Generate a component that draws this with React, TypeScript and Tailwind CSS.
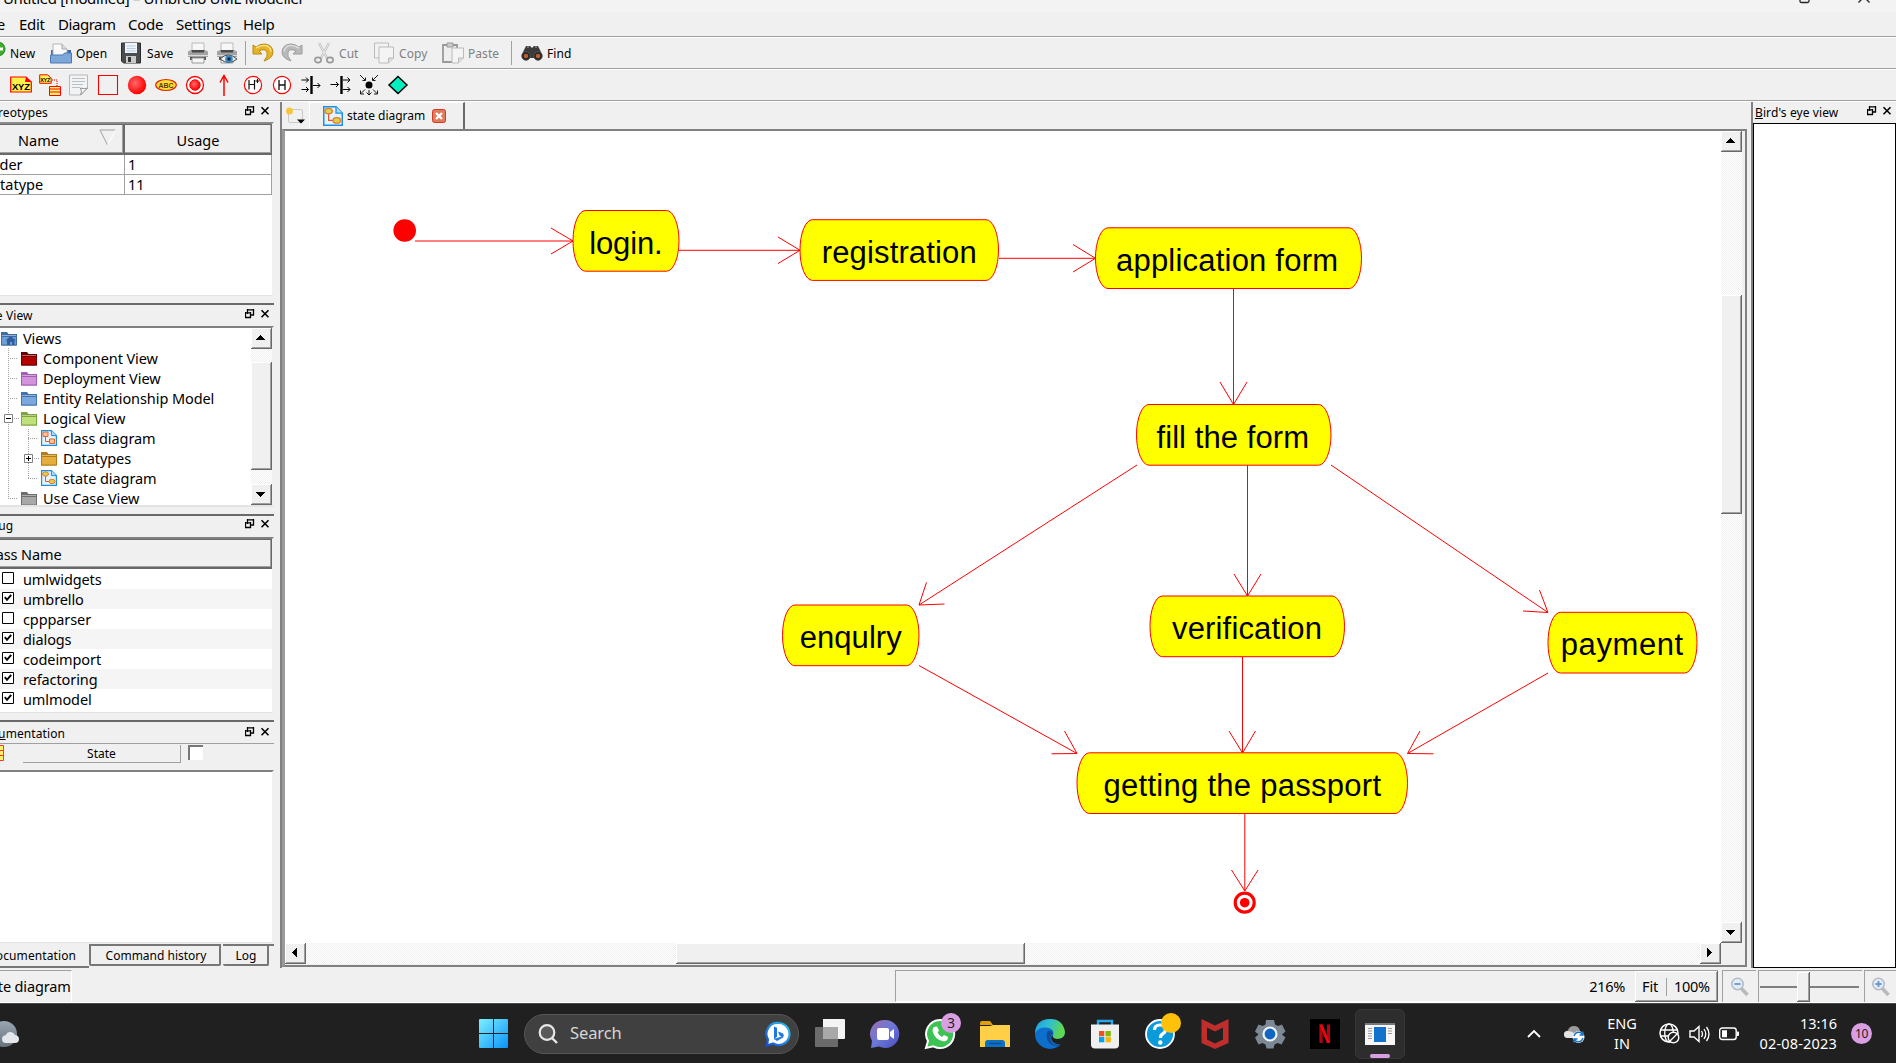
import React from "react";

const RAISED =
  "bg-[#f0f0f0] shadow-[inset_-1px_-1px_#696969,inset_1px_1px_#ffffff,inset_-2px_-2px_#a0a0a0]";
const DITHER =
  "bg-[conic-gradient(#ffffff_25%,#f0f0f0_0_50%,#ffffff_0_75%,#f0f0f0_0)] bg-[length:2px_2px]";

type Kids = { children?: React.ReactNode };

/* ---------- small shared pieces ---------- */

function Svg({ w, h, box, className = "", children }: Kids & { w: number; h: number; box?: string; className?: string }) {
  return (
    <svg width={w} height={h} viewBox={box ?? `0 0 ${w} ${h}`} className={`shrink-0 ${className}`} fill="none">
      {children}
    </svg>
  );
}

function ArrowButton({ dir }: { dir: "up" | "down" | "left" | "right" }) {
  const paths = {
    up: "M5 12h9v-1h-1v-1h-1v-1h-1v-1h-1V7h-1v1H8v1H7v1H6v1H5z",
    down: "M5 8h9v1h-1v1h-1v1h-1v1h-1v1h-1v-1H8v-1H7v-1H6V9H5z",
    left: "M12 5v9h-1v-1h-1v-1H9v-1H8v-1H7V9h1V8h1V7h1V6h1V5z",
    right: "M7 5v9h1v-1h1v-1h1v-1h1v-1h1V9h-1V8h-1V7H9V6H8V5z",
  };
  return (
    <div className={`h-[21px] w-[21px] shrink-0 ${RAISED}`}>
      <Svg w={21} h={21}>
        <path d={paths[dir]} fill="#000" />
      </Svg>
    </div>
  );
}

function DockButtons() {
  return (
    <Svg w={26} h={10} className="-mt-[2px]">
      <path d="M2.500 0v5M2 .9h7M8.500 0v6.500M6 6h3M0 3.900h6M.5 3v6M0 8.500h6M5.500 3v6" stroke="#000" strokeWidth="1.300" />
      <path d="M16.500 1.200l7 7M23.500 1.200l-7 7" stroke="#000" strokeWidth="1.600" />
    </Svg>
  );
}

function DockTitle({ children, className = "" }: Kids & { className?: string }) {
  return (
    <div className={`flex shrink-0 items-center justify-between pr-[3px] text-[12px] tracking-[0.100px] whitespace-nowrap ${className}`}>
      <span className="pt-[2px]">{children}</span>
      <DockButtons />
    </div>
  );
}

/* ---------- menu and toolbars ---------- */

function TitleBar() {
  return (
    <div className="flex h-3 shrink-0 justify-between overflow-hidden bg-[#f3f3f3]">
      <span className="mt-[-13px] ml-[3px] text-[15px] leading-[22px] tracking-[-0.360px] whitespace-nowrap">
        Untitled [modified] – Umbrello UML Modeller
      </span>
      <Svg w={110} h={12}>
        <path d="M14 -4v5q0 1.500 1.500 1.500h6q1.500 0 1.500 -1.500v-5M24 -6v6" stroke="#222" strokeWidth="1.300" />
        <path d="M72.500 2.500l11 -11M83.500 2.500l-11 -11" stroke="#222" strokeWidth="1.300" />
      </Svg>
    </div>
  );
}

function MenuBar() {
  return (
    <div className="flex h-6 shrink-0 items-center text-[15px] tracking-[-0.300px]">
      <span className="-ml-[18px] w-[37px]">File</span>
      <span className="w-[39px]">Edit</span>
      <span className="w-[70px] tracking-[-0.450px]">Diagram</span>
      <span className="w-[48px]">Code</span>
      <span className="w-[67px]">Settings</span>
      <span>Help</span>
    </div>
  );
}

function Rule() {
  return <div className="h-[2px] shrink-0 border-b border-white bg-[#a0a0a0]" />;
}

function Printer({ eye }: { eye?: boolean }) {
  return (
    <Svg w={22} h={22}>
      <path d="M5 1h12v8H5z" fill="#f7f7f7" stroke="#bbb" />
      <path d="M4 8h14v4H4z" fill="#4a4a4a" />
      <path d="M1 10q0-1.500 2-1.500h2v2h12v-2h2q2 0 2 1.500v5H1z" fill="#a3a3a3" />
      <path d="M1 13.500h20" stroke="#dcdcdc" />
      <path d="M3 15h16v3H3z" fill="#555" />
      <path d="M5 16h12v5H5z" fill="#f6f6f6" stroke="#999" />
      {eye && (
        <>
          <path d="M4 17q8-8 17 0q-8 7-17 0z" fill="#e7eef4" stroke="#444" />
          <circle cx="13" cy="17" r="3.800" fill="#3b8ac0" />
          <circle cx="13" cy="17" r="1.700" fill="#0e2a44" />
        </>
      )}
    </Svg>
  );
}

function Undo({ grey }: { grey?: boolean }) {
  return (
    <Svg w={22} h={20} className={grey ? "-scale-x-100" : ""}>
      <path
        d="M1 2v9h9L7 8q6-3 8 1q1.500 4-3 9q9-3 9-9Q20 1 12 1Q8 1 4 4z"
        fill={grey ? "#b9b9b9" : "#e6b422"}
        stroke={grey ? "#9c9c9c" : "#b98a10"}
      />
      <path d="M4 5Q9 2 13 2.500q5 .5 6 6" stroke={grey ? "#dcdcdc" : "#fbe08a"} strokeWidth="1.500" />
    </Svg>
  );
}

function MainToolbar() {
  return (
    <div className="flex h-[30px] shrink-0 items-center overflow-hidden text-[12px] tracking-[0.050px] [&_span]:pt-[1px]">
      <div className="flex w-[50px] items-center">
        <Svg w={10} h={22}>
          <circle cx="-2" cy="7" r="7" fill="#3fae2a" stroke="#1c8a1c" />
          <path d="M-2 7h5" stroke="#fff" strokeWidth="3" />
        </Svg>
        <span>New</span>
      </div>
      <div className="flex w-[71px] items-center gap-1">
        <Svg w={22} h={22}>
          <path d="M1 8h20v12H1z" fill="#3d6ca6" />
          <path d="M3 16V2h9l5 5v9z" fill="#fafafa" stroke="#b5b5b5" />
          <path d="M12 2v5h5" fill="#ddd" stroke="#aaa" />
          <path d="M.5 13h12l2-2h7v10H.5z" fill="#7ca7d8" stroke="#4a7ab4" />
        </Svg>
        <span>Open</span>
      </div>
      <div className="flex w-[66px] items-center gap-[6px]">
        <Svg w={20} h={22}>
          <path d="M.5 1h19v20H2.500L.5 19z" fill="#4a4d50" stroke="#2b2b2b" />
          <path d="M4 1h12v10H4z" fill="#eef4fa" />
          <path d="M5.500 4h9M5.500 6.500h9M5.500 9h9" stroke="#b7cce2" />
          <path d="M5 14h10v7H5z" fill="#c9c9c9" />
          <path d="M7 15h3v5H7z" fill="#333" />
        </Svg>
        <span>Save</span>
      </div>
      <div className="w-[29px]"><Printer /></div>
      <div className="w-[29px]"><Printer eye /></div>
      <div className="mr-[6px] h-6 w-[1px] bg-[#a0a0a0]" />
      <div className="w-[29px]"><Undo /></div>
      <div className="w-[33px]"><Undo grey /></div>
      <div className="flex w-[60px] items-center gap-[5px] text-[#808080]">
        <Svg w={20} h={22}>
          <path d="M5 1l8 15M15 1L7 16" stroke="#bdbdbd" strokeWidth="2.400" />
          <path d="M5 1l8 15M15 1L7 16" stroke="#ededed" strokeWidth="1" />
          <ellipse cx="4" cy="18" rx="3.200" ry="2.600" stroke="#999" strokeWidth="1.600" />
          <ellipse cx="16" cy="18" rx="3.200" ry="2.600" stroke="#999" strokeWidth="1.600" />
        </Svg>
        <span>Cut</span>
      </div>
      <div className="flex w-[68px] items-center gap-[5px] text-[#808080]">
        <Svg w={20} h={22}>
          <path d="M.5 1h14v15H.5z" fill="#f2f2f2" stroke="#bbb" />
          <path d="M5 5h14.500v11l-5 5H5z" fill="#f4f4f4" stroke="#bbb" />
          <path d="M14.500 21v-5h5" fill="#ddd" stroke="#bbb" />
        </Svg>
        <span>Copy</span>
      </div>
      <div className="flex w-[69px] items-center gap-1 text-[#808080]">
        <Svg w={22} h={22}>
          <path d="M1 3h14v17H1z" fill="#eee" stroke="#999" strokeWidth="1.800" />
          <path d="M5 1h6v4H5z" fill="#ccc" stroke="#999" />
          <path d="M10 6h11.500v10l-5 5H10z" fill="#f4f4f4" stroke="#bbb" />
          <path d="M16.500 21v-5h5" fill="#ddd" stroke="#bbb" />
        </Svg>
        <span>Paste</span>
      </div>
      <div className="mr-[9px] h-6 w-[1px] bg-[#a0a0a0]" />
      <div className="flex items-center gap-1">
        <Svg w={22} h={16}>
          <path d="M5 1h4l2 2l2-2h4l4 8v4H1V9z" fill="#3b3b3b" />
          <path d="M6 2h2M14 2h2" stroke="#aaa" />
          <circle cx="5" cy="11" r="4.200" fill="#222" stroke="#555" />
          <circle cx="5" cy="11" r="2.300" fill="#b4602a" />
          <circle cx="17" cy="11" r="4.200" fill="#222" stroke="#555" />
          <circle cx="17" cy="11" r="2.300" fill="#b4602a" />
        </Svg>
        <span>Find</span>
      </div>
    </div>
  );
}

function ToolSlot({ children }: Kids) {
  return (
    <div className="flex w-[29px] shrink-0 items-center justify-center">
      <Svg w={22} h={22}>{children}</Svg>
    </div>
  );
}

function DiagramToolbar() {
  return (
    <div className="flex h-[30px] shrink-0 items-center pl-[6px]">
      <ToolSlot>
        <path d="M.7 3h15.300l5.300 5v10H.7z" fill="#fff04a" stroke="red" strokeWidth="1.200" />
        <path d="M16 3l-1 5h6z" fill="red" />
        <text x="2" y="16" fontSize="9.500" fontWeight="700" fill="#000" textLength="18" fontFamily="Liberation Sans">XYZ</text>
      </ToolSlot>
      <ToolSlot>
        <path d="M.7 .8h8l3.500 3.500v5H.7z" fill="#fff04a" stroke="red" />
        <text x="1.300" y="8" fontSize="5.500" fontWeight="700" fill="#000" textLength="10" fontFamily="Liberation Sans">XYZ</text>
        <path d="M13 6h5v6" stroke="red" strokeDasharray="1 1" />
        <path d="M10.500 12.500h11v9h-11z" fill="#fff36a" stroke="red" />
        <path d="M10 15h12M10 18h12" stroke="red" />
      </ToolSlot>
      <ToolSlot>
        <path d="M1.500 1h18v13l-7 7h-11z" fill="#f2f3f4" stroke="#b6b9bb" />
        <path d="M4 4.500h13M4 7.500h13M4 10.500h11M4 13.500h8" stroke="#bbc0c4" />
        <path d="M12.500 21q2-3 0-7q4 1.500 7 0z" fill="#fafafa" stroke="#8e9295" />
      </ToolSlot>
      <ToolSlot><path d="M1.500 1.500h19v19h-19z" stroke="red" strokeWidth="1.100" /></ToolSlot>
      <ToolSlot>
        <defs>
          <radialGradient id="ball" cx="0.400" cy="0.400" r="0.600">
            <stop offset="0" stopColor="#ff6a6a" /><stop offset="1" stopColor="#f00" />
          </radialGradient>
        </defs>
        <circle cx="11" cy="11" r="9.200" fill="url(#ball)" />
      </ToolSlot>
      <ToolSlot>
        <ellipse cx="11" cy="11" rx="10.300" ry="5.500" fill="#ffdf30" stroke="#e02a10" strokeWidth="1.200" />
        <text x="3.600" y="13.700" fontSize="7" fontWeight="700" fill="#5a3c00" textLength="15" fontFamily="Liberation Sans">ABC</text>
      </ToolSlot>
      <ToolSlot>
        <circle cx="11" cy="11" r="8.500" stroke="red" strokeWidth="1.300" fill="#fff" />
        <circle cx="11" cy="11" r="5.200" fill="url(#ball)" stroke="red" />
      </ToolSlot>
      <ToolSlot><path d="M11 22V2M7 8.500l4-7l4 7" stroke="red" strokeWidth="1.500" /></ToolSlot>
      <ToolSlot>
        <circle cx="11" cy="11" r="8.600" stroke="red" strokeWidth="1.200" fill="#fff" />
        <path d="M7 6v9.500M12.500 6v9.500M7 10.500h5.500M13.500 7h4M15.500 5v4" stroke="#111" strokeWidth="1.200" />
      </ToolSlot>
      <ToolSlot>
        <circle cx="11" cy="11" r="8.600" stroke="red" strokeWidth="1.200" fill="#fff" />
        <path d="M8 6v10M14 6v10M8 11h6" stroke="#111" strokeWidth="1.300" />
      </ToolSlot>
      <ToolSlot>
        <path d="M11.500 2v18" stroke="#000" strokeWidth="2.400" />
        <path d="M1.500 6h7M6 3.500L8.500 6L6 8.500M1.500 15.500h7M6 13l2.500 2.500L6 18M13 11.500h7M17.500 9l2.500 2.500l-2.500 2.500" stroke="#000" />
      </ToolSlot>
      <ToolSlot>
        <path d="M12.500 2v18" stroke="#000" strokeWidth="2.400" />
        <path d="M1.500 10.500h8M7 8l2.500 2.500L7 13M14 6h7M18.500 3.500L21 6l-2.500 2.500M14 15.500h7M18.500 13l2.500 2.500l-2.500 2.500" stroke="#000" />
      </ToolSlot>
      <ToolSlot>
        <circle cx="11" cy="11" r="3.500" fill="#000" />
        <path d="M2 1l5 5M7.500 3.500v3H4.500M20 1l-5 5M14.500 3.500v3h3M7 15.500l-4 4M2.500 16.500V20h3.500M15 15.500l4 4M19.500 16.500V20h-3.500M11 16v5M8.500 18.500L11 21l2.500-2.500" stroke="#000" strokeWidth="0.900" />
      </ToolSlot>
      <ToolSlot><path d="M11 2.500l9 8.500l-9 8.500l-9-8.500z" fill="#00f0c0" stroke="#000" strokeWidth="1.500" /></ToolSlot>
    </div>
  );
}

/* ---------- left dock ---------- */

function Stereotypes() {
  return (
    <>
      <DockTitle className="h-[20px]"><span className="-ml-[20px]">Stereotypes</span></DockTitle>
      <div className="flex h-[174px] shrink-0 flex-col border-t-2 border-r-2 border-b border-t-[#8a8a8a] border-r-[#f0f0f0] border-b-[#e3e3e3] bg-white text-[14.500px]">
        <div className="flex h-[31px] shrink-0 border-t border-[#696969] bg-[#f0f0f0]">
          <div className="relative flex w-[125px] items-center border-r-2 border-b-2 border-[#696969] pt-[3px] pl-[18px] shadow-[inset_-1px_-1px_#a0a0a0]">
            Name
            <Svg w={17} h={17} className="absolute top-[4px] right-[7px]">
              <path d="M16.500 1H1l7.500 15" stroke="#a0a0a0" />
              <path d="M16.500 1L9 16" stroke="#fff" />
            </Svg>
          </div>
          <div className="flex grow items-center justify-center border-r border-b-2 border-[#696969] pt-[3px] shadow-[inset_-1px_-1px_#a0a0a0]">Usage</div>
        </div>
        {[["folder", "1", "-ml-[18px]"], ["datatype", "11", "-ml-[17px]"]].map(([name, n, ml]) => (
          <div key={name} className="flex h-[20px] shrink-0 border-b border-[#a0a0a0] leading-[19px]">
            <div className="w-[125px] overflow-hidden border-r border-[#a0a0a0]"><span className={ml}>{name}</span></div>
            <div className="grow border-r border-[#a0a0a0] pl-[3px]">{n}</div>
          </div>
        ))}
      </div>
    </>
  );
}

function Folder({ front, back, home }: { front: string; back: string; home?: boolean }) {
  return (
    <Svg w={16} h={15}>
      <path d="M0 1h6l1.500 2H16v11.500H0z" fill={back} />
      <path d="M.5 5.500h15v8.500H.5z" fill={front} stroke={back} />
      <path d="M1 4.500h14" stroke="#fff" strokeOpacity="0.450" />
      {home && <path d="M6 14v-4.500H4.500L9.500 5L15 9.500h-1.500V14h-2.500v-3h-2v3z" fill="#2f5f9c" />}
    </Svg>
  );
}

function DiagramIcon({ size = 16, oval }: { size?: number; oval?: boolean }) {
  return (
    <Svg w={size} h={size} box="0 0 16 16">
      <path d="M.6.6h9.800l5 5v9.800H.6z" fill="#e4f4ff" stroke="#1e8fe0" strokeWidth="1.200" />
      <path d="M10.400.6v5h5" fill="#a9dcff" stroke="#1e8fe0" />
      <path d="M4.500 6v5.500H9" stroke="#e4572e" />
      {oval ? (
        <>
          <ellipse cx="4.500" cy="4" rx="3" ry="2.200" fill="#d9d24a" stroke="#e8762c" />
          <ellipse cx="11" cy="11.500" rx="3" ry="2.200" fill="#d9d24a" stroke="#e8762c" />
        </>
      ) : (
        <>
          <path d="M2 2h5v4.500H2z" fill="#ffc59a" stroke="#e8622c" />
          <path d="M8.500 9h5v4.500h-5z" fill="#ffc59a" stroke="#e8622c" />
        </>
      )}
    </Svg>
  );
}

function TreeView() {
  const rows = [
    { ml: "ml-[1px]", label: "Views", icon: <Folder front="#6f9fd8" back="#3f6ca6" home /> },
    { ml: "ml-[21px]", label: "Component View", icon: <Folder front="#b50000" back="#6c0000" /> },
    { ml: "ml-[21px]", label: "Deployment View", icon: <Folder front="#d193dc" back="#a25fb4" /> },
    { ml: "ml-[21px]", label: "Entity Relationship Model", icon: <Folder front="#7ba9dd" back="#4273b0" /> },
    { ml: "ml-[21px]", label: "Logical View", icon: <Folder front="#bfe07c" back="#7fa63c" /> },
    { ml: "ml-[41px]", label: "class diagram", icon: <DiagramIcon /> },
    { ml: "ml-[41px]", label: "Datatypes", icon: <Folder front="#e6ae3c" back="#b47c18" /> },
    { ml: "ml-[41px]", label: "state diagram", icon: <DiagramIcon oval /> },
    { ml: "ml-[21px]", label: "Use Case View", icon: <Folder front="#a8a8a8" back="#6e6e6e" /> },
  ];
  return (
    <>
      <DockTitle className="h-[23px] border-t-2 border-[#696969] pb-[2px]"><span className="-ml-[22px]">Tree View</span></DockTitle>
      <div className="flex h-[181px] shrink-0 border-t-2 border-r-2 border-b-2 border-t-[#808080] border-r-[#f0f0f0] border-b-[#e3e3e3] bg-white">
        <div className="relative flex grow flex-col overflow-hidden">
          <Svg w={60} h={177} className="absolute top-0 left-0">
            <path d="M8.500 20v151M8 30.500h10M8 50.500h10M8 70.500h10M14 90.500h5M8 170.500h10M28.500 101v49M28 110.500h10M34 130.500h5M28 150.500h10" stroke="#a0a0a0" strokeDasharray="1 1" />
            <path d="M4.500 86.500h8v8h-8zM24.500 126.500h8v8h-8z" fill="#fff" stroke="#808080" />
            <path d="M6 90.500h5M26 130.500h5M28.500 128v5" stroke="#000" />
          </Svg>
          {rows.map((r) => (
            <div key={r.label} className="flex h-[20px] shrink-0 items-center">
              <span className={`flex items-center gap-[6px] ${r.ml}`}>
                {r.icon}
                <span className="text-[14.500px] leading-[20px] tracking-[-0.080px] whitespace-nowrap">{r.label}</span>
              </span>
            </div>
          ))}
        </div>
        <div className={`flex w-[21px] shrink-0 flex-col justify-between ${DITHER}`}>
          <ArrowButton dir="up" />
          <div className={`mb-[1px] h-[108px] ${RAISED}`} />
          <ArrowButton dir="down" />
        </div>
      </div>
    </>
  );
}

function DebugPanel() {
  const rows: [string, boolean][] = [
    ["umlwidgets", false], ["umbrello", true], ["cppparser", false], ["dialogs", true],
    ["codeimport", true], ["refactoring", true], ["umlmodel", true],
  ];
  return (
    <>
      <DockTitle className="h-[23px] border-t-2 border-[#696969] pb-[3px]"><span className="-ml-[25px]">Debug</span></DockTitle>
      <div className="h-[176px] shrink-0 border-t-2 border-r-2 border-b border-t-[#808080] border-r-[#f0f0f0] border-b-[#e3e3e3] bg-white text-[14.500px] tracking-[-0.100px]">
        <div className="flex h-[30px] items-center border-t border-r border-b-2 border-[#696969] bg-[#f0f0f0] pt-[3px] shadow-[inset_-1px_-1px_#a0a0a0]">
          <span className="-ml-[17px]">Class Name</span>
        </div>
        {rows.map(([name, on]) => (
          <div key={name} className="flex h-[20px] items-center gap-[9px] pl-[2px] even:bg-white odd:bg-[#f5f5f5]">
            <Svg w={12} h={12} className="-mt-[3px]">
              <path d="M.5.5h11v11H.5z" fill="#fff" stroke="#000" />
              {on && <path d="M2.800 5.200l2.200 2.600l4.200-5" stroke="#000" strokeWidth="1.900" />}
            </Svg>
            <span className="leading-[20px]">{name}</span>
          </div>
        ))}
      </div>
    </>
  );
}

function DocumentationPanel() {
  return (
    <>
      <DockTitle className="h-[24px] border-t-2 border-b border-t-[#696969] border-b-[#a0a0a0]">
        <span className="-ml-[24px]">Doc<u>u</u>mentation</span>
      </DockTitle>
      <div className="flex h-[26px] shrink-0 pt-[1px] text-[12px]">
        <Svg w={4} h={17}>
          <path d="M-8 .5H3.500v15H-8z" fill="#fff36a" stroke="#f33" />
          <path d="M-8 5.500h12M-8 10.500h12" stroke="#f33" />
        </Svg>
        <div className="ml-[19px] flex h-[18px] w-[158px] items-center justify-center border-r border-b border-[#a0a0a0]">State</div>
        <div className="ml-[7px] h-[15px] w-[15px] border-t-2 border-l-2 border-[#777] bg-white" />
      </div>
      <div className="h-[173px] shrink-0 border-t-2 border-r-2 border-b border-t-[#808080] border-r-[#f0f0f0] border-b-[#e3e3e3] bg-white" />
      <div className="flex h-[25px] shrink-0 items-start pt-[1px] text-[12px] tracking-[0.050px]">
        <div className="h-[24px] w-[89px] border-b-2 border-[#777] pt-[3px]"><span className="-ml-[13px] tracking-[0.100px]">Documentation</span></div>
        <div className="flex h-[22px] w-[132px] items-center justify-center rounded-b-[2px] border-2 border-[#777] pt-[2px] pl-[2px] tracking-[0]">Command history</div>
        <div className="ml-[2px] flex h-[22px] w-[46px] items-center justify-center rounded-b-[2px] border-t-2 border-r-2 border-b-2 border-[#777] pt-[2px] pl-[2px]">Log</div>
        <div className="h-[2px] w-[5px] bg-[#777]" />
      </div>
    </>
  );
}

/* ---------- diagram ---------- */

const nodes = [
  { label: "login.", x: 573, y: 210.5, w: 106, tx: 589.2, tw: 73.5 },
  { label: "registration", x: 800, y: 219.7, w: 198.5, tx: 821.7, tw: 155 },
  { label: "application form", x: 1095.5, y: 227.8, w: 266, tx: 1116, tw: 222 },
  { label: "fill the form", x: 1136.5, y: 404.5, w: 194.5, tx: 1156.5, tw: 152.5 },
  { label: "enqulry", x: 782.5, y: 605, w: 136.5, tx: 799.7, tw: 102 },
  { label: "verification", x: 1150, y: 596, w: 194.5, tx: 1172, tw: 150 },
  { label: "payment", x: 1548, y: 612.3, w: 149, tx: 1560.7, tw: 122.5 },
  { label: "getting the passport", x: 1077, y: 752.8, w: 330.5, tx: 1103.5, tw: 277.5 },
];

const edges = [
  "M415 241H573M551 228L573 241L551 254",
  "M679 250.300H800M778 237L800 250.300L778 263.500",
  "M999 258.300H1095.500M1073 244.500L1095.500 258.300L1073 272",
  "M1233.500 288V404.500M1220 382L1233.500 404.500L1247 382",
  "M1137 465L919 605M926.500 582.500L919 605L944.500 604",
  "M1247.500 465V596M1234 574L1247.500 596L1261 574",
  "M1331 465L1548 612.500M1539.500 590L1548 612.500L1523 611",
  "M919 665.500L1077 753.500M1064.500 731L1077 753.500L1051.500 753.800",
  "M1242.500 657V753M1229 731L1242.500 753L1255.500 731",
  "M1548 673L1407.500 753.500M1420 731L1407.500 753.500L1433.500 753.800",
  "M1244.800 814V891M1231.500 870L1244.800 891L1258 870",
];

function StateDiagram() {
  return (
    <svg width="1436" height="812" viewBox="285 131 1436 812" className="block shrink-0 bg-white">
      <g stroke="#ff0000" strokeWidth="1" fill="none">
        {edges.map((d) => <path key={d} d={d} />)}
      </g>
      <circle cx="404.700" cy="230.500" r="11.300" fill="#f00" />
      {nodes.map((n) => (
        <g key={n.label}>
          <rect x={n.x} y={n.y} width={n.w} height="60.700" rx="12.500" ry="30.300" fill="#ffff00" stroke="#ff0000" />
          <text x={n.tx} y={n.y + 43} fontSize="31" textLength={n.tw} fontFamily="Liberation Sans, Arial, sans-serif" fill="#000">
            {n.label}
          </text>
        </g>
      ))}
      <circle cx="1244.700" cy="902.700" r="9.500" fill="#fff" stroke="#f00" strokeWidth="3.200" />
      <circle cx="1244.700" cy="902.700" r="4.800" fill="#f00" />
    </svg>
  );
}

function DiagramArea() {
  return (
    <div className="flex w-[1467px] shrink-0 flex-col border-l-2 border-[#808080]">
      <div className="flex h-[27px] shrink-0 items-center">
        <div className="flex h-full w-[27px] items-center pl-[4px]">
          <Svg w={20} h={18}>
            <rect x="2.500" y="2.500" width="14" height="13" rx="1.500" fill="#f0f0f0" stroke="#c9c9c9" />
            <circle cx="3.500" cy="4" r="3.500" fill="#f8c63c" />
            <path d="M11 12.500h8l-4 4z" fill="#000" />
          </Svg>
        </div>
        <div className="flex h-full w-[156px] items-center border-t border-r-2 border-l border-t-white border-r-[#696969] border-l-white pb-[1px] pl-[13px] text-[12px]">
          <DiagramIcon size={20} oval />
          <span className="ml-1 w-[85px] tracking-[0] whitespace-nowrap">state diagram</span>
          <Svg w={14} h={14}>
            <rect x="0.500" y="0.500" width="13" height="13" rx="2" fill="#e27a5e" stroke="#d23c22" />
            <path d="M4 4l6 6M10 4l-6 6" stroke="#fff" strokeWidth="2.300" />
          </Svg>
        </div>
      </div>
      <div className="mb-[1px] flex h-[838px] flex-col border-t-2 border-r-2 border-b-2 border-l-[3px] border-[#808080] border-l-[#9a9a9a]">
        <div className="flex h-[812px]">
          <StateDiagram />
          <div className={`flex h-[812px] w-[21px] flex-col ${DITHER}`}>
            <ArrowButton dir="up" />
            <div className={`mt-[143px] mb-auto h-[219px] ${RAISED}`} />
            <ArrowButton dir="down" />
          </div>
        </div>
        <div className={`flex h-[21px] w-[1436px] ${DITHER}`}>
          <ArrowButton dir="left" />
          <div className={`mr-auto ml-[370px] w-[349px] ${RAISED}`} />
          <ArrowButton dir="right" />
        </div>
      </div>
    </div>
  );
}

function BirdsEye() {
  return (
    <div className="flex grow flex-col border-l-2 border-[#808080]">
      <DockTitle className="h-[20px] pl-[2px]"><u>B</u>ird's eye view</DockTitle>
      <div className="mt-[1px] grow border border-black bg-white" />
    </div>
  );
}

/* ---------- status bar ---------- */

function Lens({ plus }: { plus?: boolean }) {
  return (
    <Svg w={20} h={20}>
      <path d="M11 11l6.500 7" stroke="#b9b9b9" strokeWidth="3.500" />
      <circle cx="7.500" cy="7" r="5.700" fill="#e2ecf8" stroke="#b4bcc6" strokeWidth="1.600" />
      <path d={plus ? "M4.500 7h6M7.500 4v6" : "M4.500 7h6"} stroke="#6d97cc" strokeWidth="1.800" />
    </Svg>
  );
}

function StatusBar() {
  const well = "flex h-[32px] shrink-0 items-center border-t border-l border-[#a0a0a0]";
  return (
    <div className="flex h-[35px] shrink-0 items-start border-b border-white pt-[2px] text-[14.500px] tracking-[-0.150px]">
      <div className="flex h-[32px] w-[72px] shrink-0 items-center overflow-hidden border-t border-r border-t-[#a0a0a0] border-r-white pt-[1px] whitespace-nowrap">
        <span className="-ml-[22px]">state diagram</span>
      </div>
      <div className={`${well} ml-[823px] w-[823px] justify-end border-b border-b-white`}>
        <span className="mr-[10px] pt-[1px] tracking-[-0.300px]">216%</span>
        <div className={`flex h-[31px] w-[83px] items-center pt-[1px] pl-[7px] ${RAISED}`}>
          <span className="w-[24px]">Fit</span>
          <span className="mr-[7px] h-[18px] w-[1px] bg-[#a0a0a0]" />
          <span className="tracking-[-0.300px]">100%</span>
        </div>
      </div>
      <div className={`${well} ml-[4px] w-[34px] pl-[7px]`}><Lens /></div>
      <div className={`${well} ml-[2px] w-[104px] pl-[1px]`}>
        <span className="h-[2px] w-[37px] bg-[#808080]" />
        <span className={`h-[30px] w-[13px] ${RAISED}`} />
        <span className="h-[2px] w-[49px] bg-[#808080]" />
      </div>
      <div className={`${well} ml-[2px] w-[32px] pl-[6px]`}><Lens plus /></div>
    </div>
  );
}

/* ---------- taskbar ---------- */

function TaskIcon({ children, active }: Kids & { active?: boolean }) {
  return (
    <div className="flex w-[55px] shrink-0 justify-center">
      <div className={`relative flex h-[50px] w-[50px] items-center justify-center rounded-md ${active ? "border border-[#383838] bg-[#2d2d2d]" : ""}`}>
        <Svg w={30} h={30} className="overflow-visible">{children}</Svg>
        {active && <span className="absolute bottom-0 h-1 w-5 rounded-full bg-[#da9fe3]" />}
      </div>
    </div>
  );
}

function Taskbar() {
  return (
    <div className="flex h-[60px] shrink-0 items-center border-t border-[#4a4a4a] bg-[#202020] text-white">
      <Svg w={20} h={30}>
        <defs>
          <linearGradient id="moon" x1="0" y1="0" x2="0" y2="1"><stop stopColor="#9aa6b2" /><stop offset="1" stopColor="#66727e" /></linearGradient>
        </defs>
        <circle cx="4" cy="15" r="13" fill="url(#moon)" />
        <path d="M6 24q-4 0-4-4q0-3.500 4-4q1-3.500 5-3q3 .5 4 3q4 .5 4 4q0 4-4 4z" fill="#e3e6ea" />
      </Svg>
      <Svg w={29} h={29} className="ml-[459px]">
        <defs>
          <linearGradient id="win" x1="0" y1="0" x2="1" y2="1"><stop stopColor="#7cf0ff" /><stop offset="1" stopColor="#0a92f8" /></linearGradient>
        </defs>
        <path d="M0 1q0-1 1-1h13v14H0zM15 0h13q1 0 1 1v13H15zM0 15h14v14H1q-1 0-1-1zM15 15h14v13q0 1-1 1H15z" fill="url(#win)" />
      </Svg>
      <div className="ml-4 flex h-10 w-[275px] items-center rounded-full border border-[#565656] bg-[#404040] pr-[7px] pl-[13px]">
        <Svg w={20} h={20}>
          <circle cx="9" cy="8.500" r="7.300" fill="#5a5a5a" stroke="#e8e8e8" strokeWidth="2.200" />
          <path d="M14 14l5 5" stroke="#e8e8e8" strokeWidth="2.400" />
        </Svg>
        <span className="ml-3 grow text-[16.500px] tracking-[-0.100px] text-[#d6d6d6]">Search</span>
        <Svg w={26} h={26}>
          <defs>
            <linearGradient id="bing" x1="1" y1="0" x2="0" y2="1"><stop stopColor="#2cc4ea" /><stop offset="1" stopColor="#1650d8" /></linearGradient>
          </defs>
          <path d="M14 2A11 11 0 1 1 8 22.500L2 24.500l1-6A11 11 0 0 1 14 2z" fill="#fff" stroke="url(#bing)" strokeWidth="2.200" />
          <path d="M9 5.500l3 1.200v9l-3 2.500zM9 18l3 2l6-3.500q2-3-1-4.500l-4-1.500l1.500 4l2 1z" fill="#1d78e0" />
        </Svg>
      </div>
      <div className="ml-[3px] flex">
        <TaskIcon>
          <path d="M0 9q0-1 1-1h21q1 0 1 1v18q0 1-1 1H1q-1 0-1-1z" fill="#6b6b6b" />
          <path d="M8 0h21q1 0 1 1v18q0 1-1 1H8z" fill="#f4f4f4" />
          <path d="M8 8h15v12H8z" fill="#a8a8a8" />
        </TaskIcon>
        <TaskIcon>
          <defs><linearGradient id="chat" x1="0" y1="0" x2="1" y2="1"><stop stopColor="#9a6fb0" /><stop offset="0.500" stopColor="#6c78d8" /><stop offset="1" stopColor="#4a4cc0" /></linearGradient></defs>
          <path d="M15 1A14 14 0 1 1 9 27.500L1 29l1-7A14 14 0 0 1 15 1z" fill="url(#chat)" />
          <rect x="7" y="9" width="12" height="12" rx="2" fill="#fff" />
          <path d="M20 13l4-3v10l-4-3z" fill="#fff" />
        </TaskIcon>
        <TaskIcon>
          <path d="M15 1A14 14 0 1 1 8.500 27.300L1 29l2-7A14 14 0 0 1 15 1z" fill="#3cc353" stroke="#fff" strokeWidth="2" />
          <path d="M9 8l3-.5l2 4l-1.500 2q1.500 3 4.500 4.500l2-2l4 2q0 4-4 4.500Q10 21.500 7.500 12Q7.500 9 9 8z" fill="#fff" />
          <circle cx="26" cy="4" r="10" fill="#da9fe3" />
          <text x="26" y="9" fontSize="13.500" fill="#222" textAnchor="middle">3</text>
        </TaskIcon>
        <TaskIcon>
          <path d="M0 4q0-2 2-2h8l3 4h-13z" fill="#e0a100" />
          <path d="M0 7h10l3-1h17v22H0z" fill="#ffcf48" />
          <path d="M5 28v-4q0-3 3-3h14q3 0 3 3v4z" fill="#0d70c4" />
          <path d="M9 24.500h12" stroke="#0a4f94" strokeWidth="1.500" />
        </TaskIcon>
        <TaskIcon>
          <defs>
            <linearGradient id="edge1" x1="0" y1="0" x2="1" y2="0.300"><stop stopColor="#1f9be0" /><stop offset="0.500" stopColor="#30bfd0" /><stop offset="1" stopColor="#60d848" /></linearGradient>
          </defs>
          <circle cx="15" cy="15" r="15" fill="#0d6fcc" />
          <path d="M0 14Q1 0 15 0q13 0 15 13q0 7-8 7q-5 0-4-3Q20 11 14 9Q5 7 0 14z" fill="url(#edge1)" />
          <path d="M12 13q-2 12 9 14q4 .5 7-3q-9 5-12-2q-2-5 2-8q-3-4-6-1z" fill="#134a92" />
          <path d="M30 15v10l-4 .5q-7 0-9-4t1-5q-1 3 4 3.500q7 0 8-5z" fill="#202020" />
        </TaskIcon>
        <TaskIcon>
          <path d="M8 6V2h14v4" stroke="#2aa6ea" strokeWidth="2.400" />
          <path d="M1 5.500h28v20q0 4-4 4H5q-4 0-4-4z" fill="#f0f0f0" />
          <path d="M9 12h5.300v5.300H9z" fill="#f25022" /><path d="M15.500 12h5.300v5.300h-5.300z" fill="#7fba00" />
          <path d="M9 18h5.300v5.300H9z" fill="#00a4ef" /><path d="M15.500 18h5.300v5.300h-5.300z" fill="#ffb900" />
        </TaskIcon>
        <TaskIcon>
          <circle cx="15" cy="15" r="14" fill="#0a9bdc" stroke="#fff" strokeWidth="1.800" />
          <path d="M9.500 11q0-5 5.500-5q5.500 0 5.500 4.500q0 3-3 4.500q-2 1-2 4" stroke="#fff" strokeWidth="3.200" />
          <circle cx="15.300" cy="23.500" r="2.200" fill="#fff" />
          <circle cx="26" cy="4" r="10" fill="#ffc10a" />
        </TaskIcon>
        <TaskIcon>
          <path d="M1.500 0L15 6.500L28.500 0v24L15 30L1.500 24zM7 8.500v12l8 4l8-4v-12l-8 4z" fill="#c02e2c" fillRule="evenodd" />
        </TaskIcon>
        <TaskIcon>
          <path d="M11 1h8l1 4.500l3 1.500l4-1.500l3.500 7l-3.500 3l3.500 3l-4 7l-4-1.500l-3 1.500l-1 4h-7l-1-4l-3-1.500l-4 1.500l-3.500-7l3.500-3l-3.500-3l3.500-7l4 1.500l3-1.500z" fill="#7c8893" />
          <circle cx="15" cy="15" r="6.500" fill="#1066c0" stroke="#eef2f6" strokeWidth="2.200" />
        </TaskIcon>
        <TaskIcon>
          <path d="M0 0h30v30H0z" fill="#000" />
          <path d="M11 5.500v18.500M18.500 5.500v18.500" stroke="#b1060f" strokeWidth="3.200" />
          <path d="M9.400 5.500h3.200l7.500 18.500h-3.200z" fill="#e50914" />
        </TaskIcon>
        <TaskIcon active>
          <path d="M0 4h30v22H0z" fill="#f7f7f7" /><path d="M0 4h30v2H0z" fill="#777" />
          <path d="M9 8h12v15H9z" fill="#1272cc" />
          <path d="M3 9.500h4M3 12h4M3 14.500h4M3 17h4M3 19.500h4M23 9.500h4M23 12h4M23 14.500h4" stroke="#999" />
        </TaskIcon>
      </div>
      <div className="ml-[120px] flex h-full items-center">
        <Svg w={14} h={9}><path d="M1 8l6-6l6 6" stroke="#fff" strokeWidth="1.800" /></Svg>
        <Svg w={22} h={20} className="ml-[22px]">
          <path d="M5 14q-4 0-4-4q0-3 4-3.500q1-4.500 6-4.500q5 0 6 5l-5 7z" fill="#9b9b9b" />
          <path d="M5 14q-4 0-4-3.500T5 7q4 0 7 3l-2 4z" fill="#e4e4e4" />
          <circle cx="15.500" cy="13" r="6" fill="#fff" />
          <path d="M11 12q1.500-4 5-3.700q2.500 0 3.500 2M20 7.500v3.500h-3.500M20 14q-1.500 4-5 3.700q-2.500 0-3.500-2M11 18.500V15h3.500" stroke="#1672c8" strokeWidth="1.500" />
        </Svg>
        <div className="ml-[17px] w-[40px] pb-[1px] text-center text-[14.500px] leading-[20px]">ENG<br />IN</div>
        <Svg w={21} h={21} className="ml-[17px]">
          <circle cx="10" cy="10" r="9" stroke="#fff" strokeWidth="1.500" />
          <ellipse cx="10" cy="10" rx="4.300" ry="9" stroke="#fff" strokeWidth="1.300" />
          <path d="M2 7h16M2 13h8" stroke="#fff" strokeWidth="1.300" />
          <circle cx="14.500" cy="14.500" r="5.300" fill="#202020" stroke="#fff" strokeWidth="1.400" />
          <path d="M11 18l7-7" stroke="#fff" strokeWidth="1.300" />
        </Svg>
        <Svg w={21} h={18} className="ml-[9px]">
          <path d="M1 6h4l5-4.500v15L5 12H1z" stroke="#fff" strokeWidth="1.400" />
          <path d="M12.500 6q2 3 0 6M15 4q3.500 5 0 10M17.500 2q5 7 0 14" stroke="#fff" strokeWidth="1.300" />
        </Svg>
        <Svg w={21} h={14} className="ml-[9px]">
          <rect x="0.700" y="1" width="16.500" height="11.500" rx="2.500" stroke="#fff" strokeWidth="1.400" />
          <path d="M3 3.300h5v7H3zM18 4.500h1q1 0 1 1v2.500q0 1-1 1h-1z" fill="#fff" />
        </Svg>
        <div className="ml-[17px] w-[80px] pb-[2px] text-right text-[14.500px] leading-[20px] whitespace-nowrap">13:16<br /><span className="tracking-[0.180px]">02-08-2023</span></div>
        <div className="ml-[14px] flex h-[21px] w-[21px] shrink-0 items-center justify-center rounded-full bg-[#da9fe3] text-[12px] tracking-[-0.300px] text-[#222]">10</div>
      </div>
    </div>
  );
}

export default function App() {
  return (
    <div className="flex h-[1063px] w-[1896px] flex-col overflow-hidden bg-[#f0f0f0] font-['Noto_Sans','Open_Sans',sans-serif] text-black">
      <TitleBar />
      <MenuBar />
      <Rule />
      <MainToolbar />
      <Rule />
      <DiagramToolbar />
      <Rule />
      <div className="flex h-[866px] shrink-0">
        <div className="mr-[6px] flex w-[274px] shrink-0 flex-col justify-between">
          <div className="flex flex-col"><Stereotypes /></div>
          <div className="flex flex-col"><TreeView /></div>
          <div className="flex flex-col"><DebugPanel /></div>
          <div className="flex flex-col"><DocumentationPanel /></div>
        </div>
        <DiagramArea />
        <div className="w-[4px] shrink-0" />
        <BirdsEye />
      </div>
      <StatusBar />
      <Taskbar />
    </div>
  );
}
